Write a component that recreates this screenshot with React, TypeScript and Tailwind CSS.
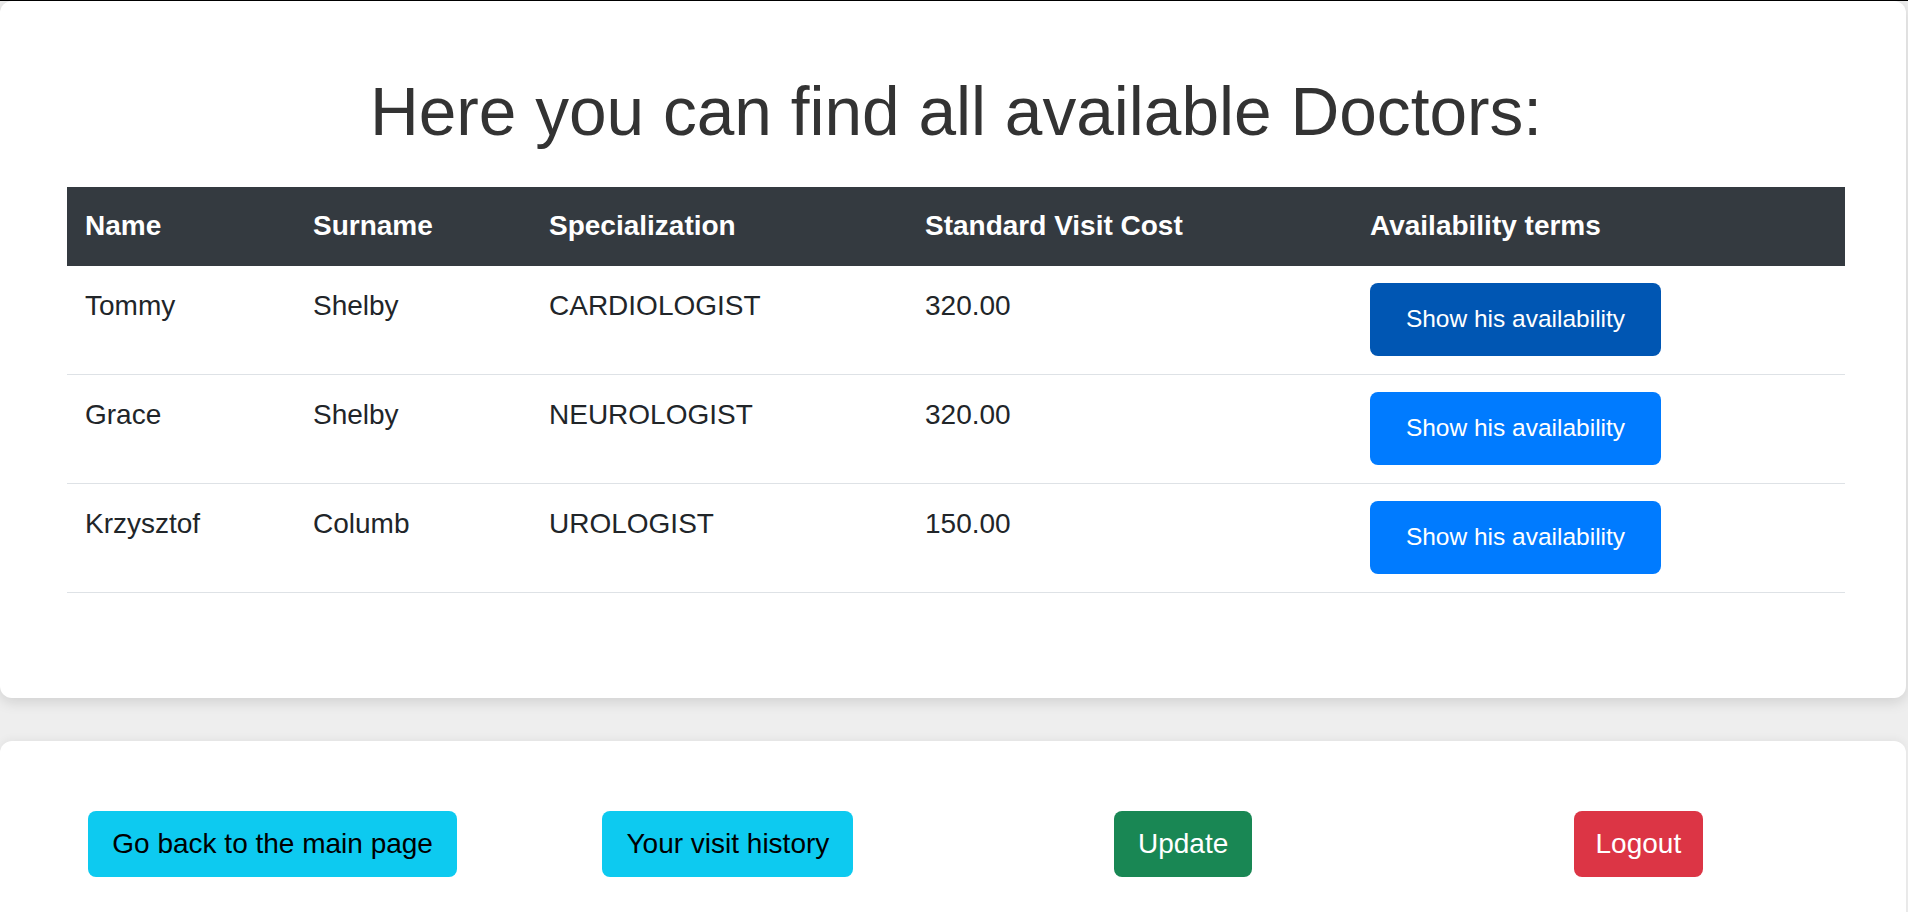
const doctors = [
  { name: 'Tommy', surname: 'Shelby', spec: 'CARDIOLOGIST', cost: '320.00' },
  { name: 'Grace', surname: 'Shelby', spec: 'NEUROLOGIST', cost: '320.00' },
  { name: 'Krzysztof', surname: 'Columb', spec: 'UROLOGIST', cost: '150.00' },
]

const headers = ['Name', 'Surname', 'Specialization', 'Standard Visit Cost', 'Availability terms']

export default function App() {
  return (
    <div className="min-h-screen bg-[#eeeeee] font-['Liberation_Sans',Arial,sans-serif] text-[#212529]">
      <div className="h-px bg-black" />

      {/* Doctors list */}
      <section className="mr-[2px] rounded-[12px] bg-white pt-[71px] pb-[105px] pl-[67px] pr-[61px] shadow-[0_4px_14px_rgba(0,0,0,0.13)]">
        <h1 className="mb-[35px] text-center text-[67.6px] leading-[80px] font-normal text-[#333333]">
          Here you can find all available Doctors:
        </h1>

        <table className="w-full table-fixed border-collapse">
          <colgroup>
            <col className="w-[228px]" />
            <col className="w-[236px]" />
            <col className="w-[376px]" />
            <col className="w-[445px]" />
            <col />
          </colgroup>
          <thead>
            <tr className="bg-[#343a40] text-white">
              {headers.map((h) => (
                <th key={h} className="px-[18px] py-[19px] text-left text-[28px] leading-[40.5px] font-bold">
                  {h}
                </th>
              ))}
            </tr>
          </thead>
          <tbody>
            {doctors.map((d, i) => (
              <tr key={d.name} className="border-b border-[#dee2e6] align-top text-[28px] leading-[46px]">
                <td className="px-[18px] pt-[17px] pb-[18px]">{d.name}</td>
                <td className="px-[18px] pt-[17px] pb-[18px]">{d.surname}</td>
                <td className="px-[18px] pt-[17px] pb-[18px]">{d.spec}</td>
                <td className="px-[18px] pt-[17px] pb-[18px]">{d.cost}</td>
                <td className="px-[18px] pt-[17px] pb-[18px]">
                  <button
                    className={
                      i === 0
                        ? 'flex h-[73px] w-[291px] items-center justify-center rounded-[8px] bg-[#0056b3] text-[24.5px] text-white'
                        : 'flex h-[73px] w-[291px] items-center justify-center rounded-[8px] bg-[#007bff] text-[24.5px] text-white'
                    }
                  >
                    Show his availability
                  </button>
                </td>
              </tr>
            ))}
          </tbody>
        </table>
      </section>

      {/* Navigation */}
      <section className="mt-[43px] mr-[2px] min-h-[260px] rounded-[12px] bg-white pt-[70px] shadow-[0_-2px_8px_rgba(0,0,0,0.05)]">
        <div className="ml-[45px] mr-[40px] grid grid-cols-4">
          <div className="flex justify-center">
            <button className="h-[66px] rounded-[8px] bg-[#0dcaf0] px-[24px] text-[28px] text-black">
              Go back to the main page
            </button>
          </div>
          <div className="flex justify-center">
            <button className="h-[66px] rounded-[8px] bg-[#0dcaf0] px-[24px] text-[28px] text-black">
              Your visit history
            </button>
          </div>
          <div className="flex justify-center">
            <button className="h-[66px] rounded-[8px] bg-[#198754] px-[24px] text-[28px] text-white">
              Update
            </button>
          </div>
          <div className="flex justify-center">
            <button className="h-[66px] rounded-[8px] bg-[#dc3545] px-[22px] text-[28px] text-white">
              Logout
            </button>
          </div>
        </div>
      </section>
    </div>
  )
}
